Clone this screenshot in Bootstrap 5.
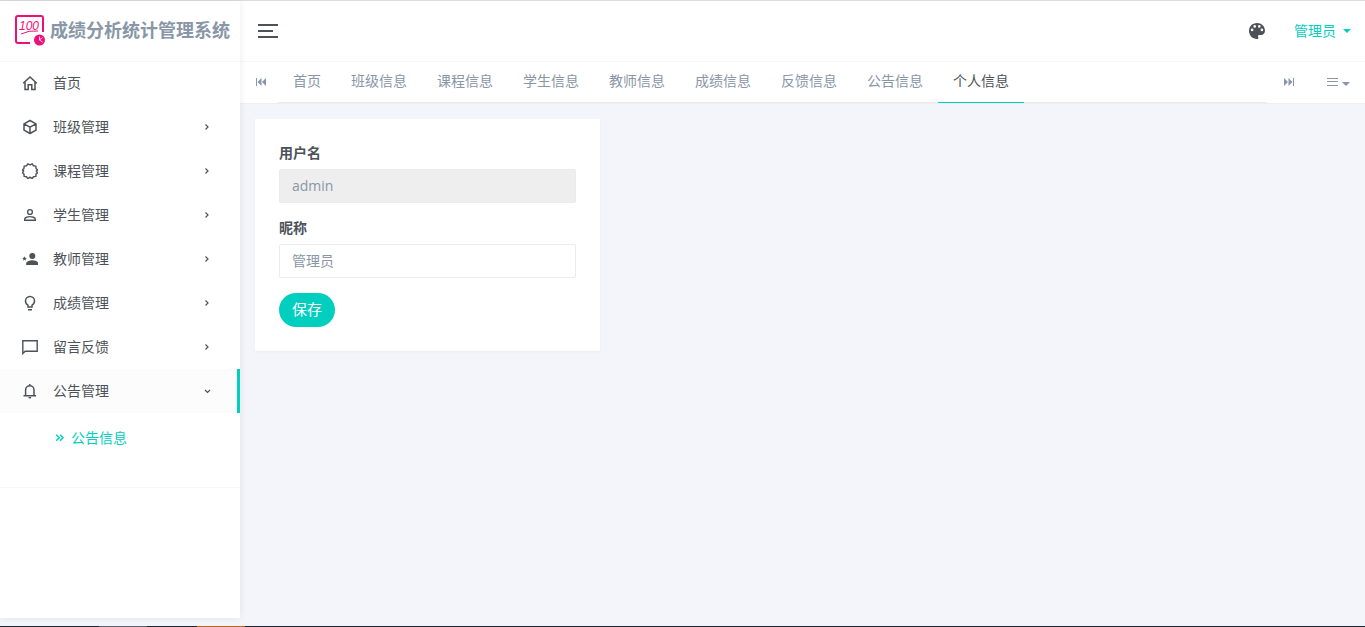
<!DOCTYPE html>
<html lang="zh-CN">
<head>
<meta charset="utf-8">
<meta name="viewport" content="width=device-width, initial-scale=1">
<title>成绩分析统计管理系统</title>
<link href="https://cdn.jsdelivr.net/npm/bootstrap@5.3.0/dist/css/bootstrap.min.css" rel="stylesheet">
<style>
  :root { --teal: #00cfbf; --ink: #4d5259; --muted: #8896a8; --line: #ebebeb; }
  body { font-family: "Open Sans", "Noto Sans CJK SC", sans-serif; font-size: 14px; line-height: 20px; color: var(--ink); background: #f4f5fa; }
  a { color: inherit; text-decoration: none; }
  svg { display: block; flex: none; }
  .app-shell { border-top: 1px solid #dcdcdc; }
  .side-panel { width: 240px; background: #fff; margin-bottom: 8px; box-shadow: 0 0 8px rgba(0,0,0,.08); z-index: 2; }
  .brand-link { height: 60px; padding: 0 0 2px 14px; gap: 4px; font-size: 18px; font-weight: 700; color: var(--muted); box-shadow: 0 1px 0 #f7f7f7; }
  .side-menu { border-bottom: 1px solid #f5f5f5; }
  .side-link { height: 44px; padding: 0 27px 0 22px; gap: 15px; }
  .side-link .chev { margin-left: auto; }
  .side-link.current { background: #fcfcfc; border-right: 3px solid var(--teal); padding-right: 24px; }
  .sub-menu { padding: 15px 0 39px 55px; color: var(--teal); }
  .sub-menu a { gap: 6px; }
  .top-bar { height: 60px; padding: 0 14px 0 18px; background: #fff; }
  .top-bar button, .tab-bar button { background: none; border: 0; padding: 0; color: inherit; }
  .user-menu { color: var(--teal) !important; gap: 7px; }
  .tab-bar { height: 43px; background: #fff; color: var(--muted); border-top: 1px solid #f8f8f8; border-bottom: 1px solid #eee; }
  .tab-bar .step-button { width: 38px; padding: 0 0 2px 16px; }
  .tab-list { border-bottom: 1px solid var(--line); }
  .tab-list a { display: block; height: 41px; padding: 9px 15px; }
  .tab-list a.current { color: var(--ink); border-bottom: 1px solid var(--teal); }
  .tab-tools { width: 98px; padding: 0 15px 2px 17px; }
  .page-body { padding: 15px 0; }
  .page-body .row { --bs-gutter-x: 30px; }
  .panel-box { background: #fff; padding: 24px; box-shadow: 0 1px 3px rgba(0,0,0,.04); }
  .panel-box label { display: block; font-weight: 700; margin-bottom: 6px; }
  .panel-box .form-control { height: 34px; font-size: 14px; line-height: 20px; padding: 5px 12px 7px; color: var(--muted); border-color: var(--line); border-radius: 2px; margin-bottom: 15px; }
  .panel-box .form-control:disabled { background: #eee; }
  .save-button { height: 34px; padding: 0 13px 2px; border: 0; border-radius: 17px; background: var(--teal); color: #fff; font-size: 15px; line-height: 32px; display: block; }
  .status-strip { height: 1px; background: linear-gradient(90deg, #1c2632 99px, #5a626c 99px 147px, #1c2632 147px 197px, #b5651d 197px 245px, #1c2632 245px); }
</style>
</head>
<body>
<div class="app-shell d-flex flex-column min-vh-100">
  <div class="d-flex flex-grow-1">
    <aside class="side-panel flex-shrink-0">
      <a class="brand-link d-flex align-items-center" href="#">
        <svg width="32" height="32" viewBox="0 0 32 32" fill="none" stroke="#ee1078">
          <path d="M16 29H4a2 2 0 0 1-2-2V4a2 2 0 0 1 2-2h23a2 2 0 0 1 2 2v14" stroke-width="2"/>
          <text x="5" y="16" fill="#ee1078" stroke="none" font-family="Liberation Sans" font-style="italic" font-weight="400" font-size="12">100</text>
          <path d="M7 20q8-4 17-3" stroke-width="1"/>
          <circle cx="25.500" cy="26" r="5.500" fill="#ee1078" stroke="none"/>
          <path d="M25.500 22.500V26l3 2M25.500 26l3-2.500" stroke="#fff" stroke-width=".8"/>
        </svg>
        <span>成绩分析统计管理系统</span>
      </a>
      <nav class="side-menu" aria-label="主菜单">
        <a class="side-link d-flex align-items-center" href="#"><svg width="16" height="16" viewBox="0 0 16 16" fill="none" stroke="currentColor" stroke-width="1.500"><path d="M1.200 8.200 8 2l6.800 6.200M3 7v7.400h3.200V9.800h3.600v4.600H13V7"/></svg>首页</a>
        <a class="side-link d-flex align-items-center" href="#"><svg width="16" height="16" viewBox="0 0 16 16" fill="none" stroke="currentColor" stroke-width="1.500" stroke-linejoin="round"><path d="m8 1.500 6 3.300v6.400l-6 3.300-6-3.300V4.800zM2 4.800l6 3.400 6-3.400M8 8.200v6.300"/></svg>班级管理<svg class="chev" width="12" height="12" viewBox="0 0 12 12" fill="none" stroke="currentColor" stroke-width="1.200"><path d="m4.500 3.500 2.500 2.500-2.500 2.500"/></svg></a>
        <a class="side-link d-flex align-items-center" href="#"><svg width="16" height="16" viewBox="0 0 16 16" fill="none" stroke="currentColor" stroke-width="1.400" stroke-linejoin="round"><path d="M8 1.800 10.200.8l1.300 2 2.400.3.100 2.400 1.600 1.400L14.300 8l1.300 1.600-1.600 1.400-.1 2.400-2.400.3-1.300 2L8 14.200l-2.200 1.500-1.300-2-2.400-.3L2 11 .4 9.600 1.700 8 .4 6.900 2 5.500l.1-2.400 2.400-.3 1.300-2z"/></svg>课程管理<svg class="chev" width="12" height="12" viewBox="0 0 12 12" fill="none" stroke="currentColor" stroke-width="1.200"><path d="m4.500 3.500 2.500 2.500-2.500 2.500"/></svg></a>
        <a class="side-link d-flex align-items-center" href="#"><svg width="16" height="16" viewBox="0 0 16 16" fill="none" stroke="currentColor" stroke-width="1.400"><circle cx="8" cy="5" r="2.400"/><path d="M2.700 13.300v-1.100c0-1.700 3.300-2.600 5.300-2.600s5.300.9 5.300 2.600v1.100z"/></svg>学生管理<svg class="chev" width="12" height="12" viewBox="0 0 12 12" fill="none" stroke="currentColor" stroke-width="1.200"><path d="m4.500 3.500 2.500 2.500-2.500 2.500"/></svg></a>
        <a class="side-link d-flex align-items-center" href="#"><svg width="16" height="16" viewBox="0 0 16 16" fill="currentColor"><circle cx="10.300" cy="4.900" r="3"/><path d="M4.200 14v-1.600c0-2.200 3.900-3.100 6.100-3.100s5.900.9 5.900 3.100V14zM2.500 5.200l.7 1.600 1.700.1-1.300 1.100.4 1.700-1.500-.9-1.500.9.400-1.700L.1 6.900l1.700-.1z"/></svg>教师管理<svg class="chev" width="12" height="12" viewBox="0 0 12 12" fill="none" stroke="currentColor" stroke-width="1.200"><path d="m4.500 3.500 2.500 2.500-2.500 2.500"/></svg></a>
        <a class="side-link d-flex align-items-center" href="#"><svg width="16" height="16" viewBox="0 0 16 16" fill="none" stroke="currentColor" stroke-width="1.500"><path d="M6 12v-1.800C4.500 9.400 3.500 7.900 3.500 6a4.500 4.500 0 0 1 9 0c0 1.900-1 3.400-2.500 4.200V12zM6 14.700h4"/></svg>成绩管理<svg class="chev" width="12" height="12" viewBox="0 0 12 12" fill="none" stroke="currentColor" stroke-width="1.200"><path d="m4.500 3.500 2.500 2.500-2.500 2.500"/></svg></a>
        <a class="side-link d-flex align-items-center" href="#"><svg width="16" height="16" viewBox="0 0 16 16" fill="none" stroke="currentColor" stroke-width="1.400"><path d="M.8 14.500V1.700h14.400v10.500H3.200z"/></svg>留言反馈<svg class="chev" width="12" height="12" viewBox="0 0 12 12" fill="none" stroke="currentColor" stroke-width="1.200"><path d="m4.500 3.500 2.500 2.500-2.500 2.500"/></svg></a>
        <a class="side-link current d-flex align-items-center" href="#"><svg width="16" height="16" viewBox="0 0 16 16" fill="none" stroke="currentColor" stroke-width="1.500"><path d="M1.500 12.700h12.600M3.600 12.500V7a4.200 4.200 0 0 1 8.400 0v5.500M7.800 1v2"/><path d="M6.300 14h3a1.500 1.500 0 0 1-3 0z" fill="currentColor" stroke="none"/></svg>公告管理<svg class="chev" width="12" height="12" viewBox="0 0 12 12" fill="none" stroke="currentColor" stroke-width="1.200"><path d="M4 5l2.500 2.500L9 5"/></svg></a>
        <div class="sub-menu"><a class="d-flex align-items-center" href="#"><svg width="10" height="10" viewBox="0 0 10 10" fill="none" stroke="currentColor" stroke-width="1.500"><path d="m1.200 1.800 3 3-3 3M5 1.800l3 3-3 3"/></svg>公告信息</a></div>
      </nav>
    </aside>
    <div class="flex-grow-1">
      <header class="top-bar d-flex align-items-center justify-content-between">
        <button type="button" aria-label="收起菜单"><svg width="20" height="14" viewBox="0 0 20 14" fill="currentColor"><path d="M0 0h20v2H0zM0 6h15v2H0zM0 12h20v2H0z"/></svg></button>
        <div class="d-flex align-items-center">
          <button class="me-4 pe-1" type="button" aria-label="主题"><svg width="18" height="18" viewBox="0 0 18 18" fill="currentColor"><path fill-rule="evenodd" d="M9 1C4.300 1 1 4.600 1 9s3.500 8 8 8c.8 0 1.400-.6 1.400-1.300 0-.7-.4-.8-.4-1.400 0-.7.5-1.300 1.300-1.300H13c2.300 0 4-1.800 4-4.200C17 4.200 13.500 1 9 1zM4.100 9.200a1.300 1.300 0 1 1 0-2.600 1.300 1.300 0 0 1 0 2.600zm2.600-3.500a1.300 1.300 0 1 1 0-2.600 1.300 1.300 0 0 1 0 2.600zm4.600 0a1.300 1.300 0 1 1 0-2.600 1.300 1.300 0 0 1 0 2.600zm2.600 3.500a1.300 1.300 0 1 1 0-2.600 1.300 1.300 0 0 1 0 2.600z"/></svg></button>
          <button class="user-menu d-flex align-items-center" type="button">管理员<svg width="8" height="4" viewBox="0 0 8 4" fill="currentColor"><path d="M0 0h8L4 4z"/></svg></button>
        </div>
      </header>
      <div class="tab-bar d-flex">
        <button class="step-button" type="button" aria-label="向左"><svg width="10" height="8" viewBox="0 0 10 8" fill="currentColor"><path d="M0 0h1v8H0zM5.500 0v8L1.500 4zM10 0v8L6 4z"/></svg></button>
        <nav class="tab-list d-flex flex-grow-1" aria-label="标签页">
          <a href="#">首页</a><a href="#">班级信息</a><a href="#">课程信息</a><a href="#">学生信息</a><a href="#">教师信息</a><a href="#">成绩信息</a><a href="#">反馈信息</a><a href="#">公告信息</a><a class="current" href="#" aria-current="page">个人信息</a>
        </nav>
        <div class="tab-tools d-flex align-items-center justify-content-between">
          <button type="button" aria-label="向右"><svg width="10" height="8" viewBox="0 0 10 8" fill="currentColor"><path d="M9 0h1v8H9zM0 0v8l4-4zM4.500 0v8l4-4z"/></svg></button>
          <button class="d-flex align-items-center gap-1" type="button" aria-label="标签操作"><svg width="11" height="8" viewBox="0 0 11 8" fill="currentColor"><path d="M0 0h11v1H0zM0 3h11v1H0zM0 7h11v1H0z"/></svg><svg class="mt-1" width="8" height="4" viewBox="0 0 8 4" fill="currentColor"><path d="M0 0h8L4 4z"/></svg></button>
        </div>
      </div>
      <main class="page-body container-fluid">
        <div class="row mx-0">
          <div class="col-sm-8 col-md-6 col-lg-4">
            <form class="panel-box">
              <label for="username">用户名</label>
              <input class="form-control" id="username" type="text" value="admin" disabled>
              <label for="nickname">昵称</label>
              <input class="form-control" id="nickname" type="text" value="管理员">
              <button class="save-button" type="button">保存</button>
            </form>
          </div>
        </div>
      </main>
    </div>
  </div>
  <footer class="status-strip"></footer>
</div>
<script src="https://cdn.jsdelivr.net/npm/bootstrap@5.3.0/dist/js/bootstrap.bundle.min.js"></script>
</body>
</html>
